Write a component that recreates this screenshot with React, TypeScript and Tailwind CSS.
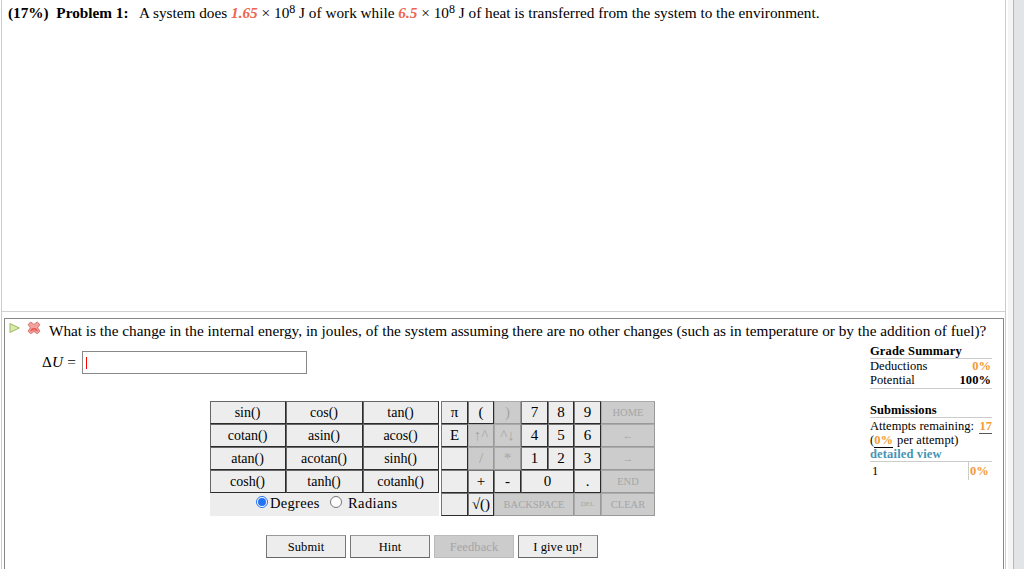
import React, { useState } from "react";
import clsx from "clsx";

type Key = { label: string; off?: boolean; className?: string };

const functions = [
  "sin()",
  "cos()",
  "tan()",
  "cotan()",
  "asin()",
  "acos()",
  "atan()",
  "acotan()",
  "sinh()",
  "cosh()",
  "tanh()",
  "cotanh()",
];

const keys: Key[] = [
  { label: "π" },
  { label: "(" },
  { label: ")", off: true },
  { label: "7" },
  { label: "8" },
  { label: "9" },
  { label: "HOME", off: true, className: "text-[10.5px]" },
  { label: "E" },
  { label: "↑^", off: true },
  { label: "^↓", off: true },
  { label: "4" },
  { label: "5" },
  { label: "6" },
  { label: "←", off: true, className: "text-[11px]" },
  { label: "" },
  { label: "/", off: true },
  { label: "*", off: true },
  { label: "1" },
  { label: "2" },
  { label: "3" },
  { label: "→", off: true, className: "text-[11px]" },
  { label: "" },
  { label: "+" },
  { label: "-" },
  { label: "0", className: "col-span-2" },
  { label: "." },
  { label: "END", off: true, className: "text-[10.5px]" },
  { label: "" },
  { label: "√()" },
  { label: "BACKSPACE", off: true, className: "col-span-3 text-[10.5px]" },
  { label: "DEL", off: true, className: "text-[7px]" },
  { label: "CLEAR", off: true, className: "text-[10.5px]" },
];

const actions: Key[] = [
  { label: "Submit" },
  { label: "Hint" },
  { label: "Feedback", off: true },
  { label: "I give up!" },
];

const Radio = ({
  checked,
  onClick,
}: {
  checked: boolean;
  onClick: () => void;
}) => (
  <button
    role="radio"
    aria-checked={checked}
    onClick={onClick}
    className={clsx(
      "mb-[5px] flex h-3 w-3 items-center justify-center rounded-full border bg-white",
      checked ? "border-[#2372f5]" : "border-[#777]",
    )}
  >
    {checked && <span className="h-2 w-2 rounded-full bg-[#2372f5]" />}
  </button>
);

const Keypad = () => {
  const [unit, setUnit] = useState("Degrees");

  return (
    <div className="flex gap-[2px]">
      <div className="w-[229px] bg-[#ededed]">
        <div className="grid grid-cols-[76px_77px_76px] auto-rows-[23px] text-[14px] leading-[21px]">
          {functions.map((name) => (
            <button
              key={name}
              className="border border-t-[#666] border-l-[#666] border-r-[#2b2b2b] border-b-[#2b2b2b] bg-[#ededed] pr-px"
            >
              {name}
            </button>
          ))}
        </div>
        <div className="flex h-[22px] items-center pl-[46px] text-[14.5px]">
          <Radio
            checked={unit === "Degrees"}
            onClick={() => setUnit("Degrees")}
          />
          <span className="ml-[2px] mr-[10px] w-[50px] tracking-[0.3px]">
            Degrees
          </span>
          <Radio
            checked={unit === "Radians"}
            onClick={() => setUnit("Radians")}
          />
          <span className="ml-[6px] tracking-[0.4px]">Radians</span>
        </div>
      </div>
      <div className="grid grid-cols-[27px_26px_27px_27px_26px_27px_54px] auto-rows-[23px] leading-[21px]">
        {keys.map((key, index) => (
          <button
            key={index}
            disabled={key.off}
            className={clsx(
              "border whitespace-nowrap",
              key.off
                ? "border-t-[#aaa] border-l-[#aaa] border-r-[#999] border-b-[#999] bg-[#ccc] text-[#a5a5a5]"
                : "border-t-[#777] border-l-[#777] border-r-[#2b2b2b] border-b-[#2b2b2b] bg-[#ededed]",
              key.className,
              !key.className?.includes("text-") && "text-[15px]",
            )}
          >
            {key.label}
          </button>
        ))}
      </div>
    </div>
  );
};

const Summary = () => (
  <div className="mt-px w-[122px] text-[12.5px] leading-[14px] tracking-[0.05px]">
    <div className="h-[14px] border-b border-[#ccc] font-bold">
      <span className="relative -top-px tracking-[0.15px]">Grade Summary</span>
    </div>
    <div className="h-[30px] border-b border-[#ccc]">
      <div className="flex justify-between">
        <span>Deductions</span>
        <span className="mr-px font-bold text-[#f29a36]">0%</span>
      </div>
      <div className="flex justify-between">
        <span>Potential</span>
        <span className="mr-px font-bold">100%</span>
      </div>
    </div>
    <div className="mt-[14px] h-[15px] border-b border-[#ccc] font-bold">
      Submissions
    </div>
    <div className="flex h-[15px] justify-between whitespace-nowrap pt-px">
      <span>Attempts remaining:</span>
      <span className="h-[15px] border-b border-[#555] font-bold text-[#f29a36]">
        17
      </span>
    </div>
    <div className="flex h-[14px]">
      (
      <span className="h-[15px] border-b border-black font-bold text-[#f29a36]">
        0%
      </span>
      <span className="ml-[4px]">per attempt)</span>
    </div>
    <div className="h-[15px] border-b border-[#ccc] font-bold tracking-[0.15px] text-[#4795b3]">
      detailed view
    </div>
    <div className="flex h-[18px] leading-[19px]">
      <span className="w-[98px] pl-[2px]">1</span>
      <span className="border-l border-[#ccc] pl-px font-bold text-[#f29a36]">
        0%
      </span>
    </div>
  </div>
);

const Power = () => (
  <span>
    10
    <sup className="relative -top-[5.5px] align-baseline text-[12px] leading-none">
      8
    </sup>
  </span>
);

const App = () => {
  return (
    <div className="flex h-[569px] w-[1024px] overflow-hidden bg-white pl-px font-['Liberation_Serif',serif] text-[15.28px] text-black">
      <div className="flex w-[1005px] flex-col border-x border-[#ccc]">
        <div className="h-[312px] border-b border-[#d0d0d0] pl-[6px]">
          <div className="flex h-[24px] whitespace-pre leading-[25px]">
            <b className="w-[131px]">(17%)  Problem 1:</b>
            <span>A system does </span>
            <span className="font-bold italic text-[#ee6450]">1.65</span>
            <span>
              {" "}
              × <Power /> J of work while{" "}
            </span>
            <span className="font-bold italic text-[#ee6450]">6.5</span>
            <span>
              {" "}
              × <Power /> J of heat is transferred from the system to the
              environment.
            </span>
          </div>
        </div>
        <div className="mt-[6px] ml-[2px] flex w-[1000px] grow flex-col border border-b-0 border-[#888]">
          <div className="flex h-[25px] whitespace-nowrap pl-[4px] leading-[24px]">
            <svg width="12" height="12" viewBox="0 0 12 12" className="mt-[3px]">
              <path
                d="M1 1.5 L10.3 6 L1 10.5 Z"
                fill="#d7eba6"
                stroke="#9db769"
                strokeLinejoin="round"
              />
            </svg>
            <svg
              width="14"
              height="14"
              viewBox="0 0 14 14"
              className="mt-[2px] ml-[6px]"
            >
              <path
                d="M3.6 1.2 L5.6 2.2 L7 3.6 L8.4 2.2 L10.4 1.2 L12.8 3.4 L11.8 5.2 L10.6 6.8 L11.8 8.4 L12.8 10.4 L10.4 12.6 L8.4 11.6 L7 10.4 L5.6 11.6 L3.6 12.6 L1.2 10.4 L2.2 8.4 L3.4 6.8 L2.2 5.2 L1.2 3.4 Z"
                fill="#f4a09b"
                stroke="#cf6f6c"
                strokeLinejoin="round"
              />
              <path
                d="M3.6 10 L5 7.6 L9 7.6 L10.4 10 L7 8.6 Z"
                fill="#ea5f5a"
                stroke="#ea5f5a"
              />
            </svg>
            <span className="ml-[8px]">
              What is the change in the internal energy, in joules, of the
              system assuming there are no other changes (such as in temperature
              or by the addition of fuel)?
            </span>
          </div>
          <div className="flex h-[57px] justify-between pr-[11px] pl-[37px]">
            <label className="mt-[7px] flex h-[23px] items-center">
              <span className="w-[40px] whitespace-nowrap tracking-[0.2px]">
                Δ<i>U</i> =
              </span>
              <span className="flex h-[23px] w-[225px] items-center border border-[#888] pl-[3px]">
                <span className="h-[12px] w-px bg-[#f00]" />
              </span>
            </label>
            <Summary />
          </div>
          <div className="pl-[205px]">
            <Keypad />
          </div>
          <div className="mt-[19px] flex gap-[4px] pl-[261px]">
            {actions.map((action) => (
              <button
                key={action.label}
                disabled={action.off}
                className={clsx(
                  "h-[23px] w-[80px] border pt-[2px] text-[12.5px] tracking-[0.1px]",
                  action.off
                    ? "border-[#bbb] bg-[#ccc] text-[#a5a5a5]"
                    : "border-t-[#999] border-l-[#777] border-r-[#777] border-b-[#666] bg-[#ededed]",
                )}
              >
                {action.label}
              </button>
            ))}
          </div>
        </div>
      </div>
      <div className="ml-[2px] w-[5px] bg-[#f5f5f5]" />
      <div className="grow border-l border-[#b9b9b9] bg-[#e3e4e6]" />
    </div>
  );
};

export default App;
